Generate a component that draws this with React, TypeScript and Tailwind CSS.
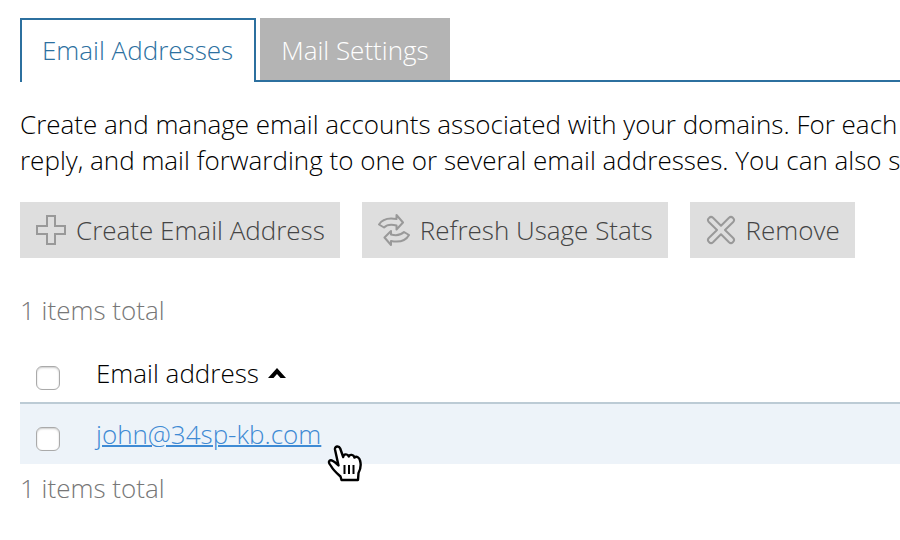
import type { ReactNode } from "react"

const intro = [
  "Create and manage email accounts associated with your domains. For each",
  "reply, and mail forwarding to one or several email addresses. You can also s",
]

const accounts = ["john@34sp-kb.com"]

function PlusIcon() {
  return (
    <svg width="30" height="30" viewBox="0 0 30 30" fill="none" stroke="#999" strokeWidth="2" aria-hidden="true">
      <path d="M11 1h8v10h10v8H19v10h-8V19H1v-8h10z" />
    </svg>
  )
}

function RefreshIcon() {
  return (
    <svg width="32" height="32" viewBox="0 0 32 32" fill="none" stroke="#999" strokeWidth="2" strokeLinejoin="round" aria-hidden="true">
      <path d="M1 10.500C4 5.500 10 3.500 18.500 5V1L25 8.500 18.500 15.500V11.500C13 10 9 10.500 6 13.500z" />
      <path d="M31 21C28 26.500 21 28.500 13 27V31L6.500 23.500 13 17V20.500C19 22 23 21 26 18z" />
    </svg>
  )
}

function CrossIcon() {
  return (
    <svg width="30" height="30" viewBox="0 0 30 30" fill="none" stroke="#999" strokeWidth="2" strokeLinejoin="round" aria-hidden="true">
      <path d="M3.300 2.800Q5 1 7 2.800L15 10.800 23 2.800Q25 1 26.800 2.800L27.200 3.200Q29 5 27.200 7L19 15 27.200 23Q29 25 27.200 26.800L26.800 27.200Q25 29 23 27.200L15 19.200 7 27.200Q5 29 3.200 27.200L2.800 26.800Q1 25 2.800 23L11 15 2.800 7Q1 5 2.800 3.200z" />
    </svg>
  )
}

function HandPointer() {
  return (
    <svg className="absolute top-10 left-[307px]" width="36" height="38" viewBox="0 0 36 38" aria-hidden="true">
      <path
        d="M8 5.500C7.500 1.800 12 1.500 13.200 4.500L16.200 13C16.500 9.800 20.500 9.500 21.800 12.500C22.800 10 26.500 10.500 27.500 13.500C29.500 11.800 32.500 13.500 33 16.500C34.500 21 33.500 25 31.500 29L31 36H14.500L13.500 32.500C9.500 29 6.500 26.500 4 22C.500 18.500 2 15.500 5 16.500C7.500 17.500 9.500 19.500 11.500 21.500L8 5.500z"
        fill="#fff"
        stroke="#000"
        strokeWidth="2.400"
        strokeLinejoin="round"
      />
      <path d="M17.500 21v9M22 21v9M26.500 21v9" stroke="#000" strokeWidth="2" />
    </svg>
  )
}

function ToolButton({ icon, children }: { icon: ReactNode; children: ReactNode }) {
  return (
    <button type="button" className="flex h-14 items-center gap-2.5 bg-[#dedede] pr-[15px] pl-4 text-[#444]">
      {icon}
      {children}
    </button>
  )
}

function CheckBox({ label }: { label: string }) {
  return (
    <input
      type="checkbox"
      aria-label={label}
      className="mt-2.5 block size-6 appearance-none rounded-md border border-[#aaa] bg-white shadow-[inset_0_1px_2px_#ccc] checked:bg-[#3e8ad4]"
    />
  )
}

export default function App() {
  return (
    <div className="overflow-hidden bg-white pt-[18px] pb-6 pl-5 font-['Open_Sans',sans-serif] text-[26px] leading-9 font-light text-black">
      <div role="tablist" className="flex h-16">
        <button type="button" role="tab" aria-selected="true" className="border-2 border-b-0 border-[#2c709f] pr-[21px] pb-0.5 pl-5 text-[#2c709f]">
          Email Addresses
        </button>
        <div className="flex grow border-b-2 border-[#2c709f] pl-1">
          <button type="button" role="tab" aria-selected="false" className="bg-[#b4b4b4] px-[21px] pt-0.5 text-white">
            Mail Settings
          </button>
        </div>
      </div>

      <p className="mt-6 whitespace-nowrap">
        {intro.map((line) => (
          <span key={line} className="block">{line}</span>
        ))}
      </p>

      <div className="mt-6 flex gap-[22px] whitespace-nowrap">
        <ToolButton icon={<PlusIcon />}>Create Email Address</ToolButton>
        <ToolButton icon={<RefreshIcon />}>Refresh Usage Stats</ToolButton>
        <ToolButton icon={<CrossIcon />}>Remove</ToolButton>
      </div>

      <div className="mt-[34px] text-[#777]">1 items total</div>

      <table className="mt-4 w-full border-separate border-spacing-0 text-left">
        <thead>
          <tr className="h-[60px]">
            <th className="w-[76px] border-b-2 border-[#bccbd5] pl-4"><CheckBox label="Select all" /></th>
            <th className="border-b-2 border-[#bccbd5] font-light" aria-sort="ascending">
              <button type="button" className="flex items-center gap-2">
                Email address
                <svg width="20" height="12" viewBox="0 0 20 12" aria-hidden="true">
                  <path d="M1 11L10 1l9 10h-5.500L10 7l-3.500 4z" />
                </svg>
              </button>
            </th>
          </tr>
        </thead>
        <tbody>
          {accounts.map((email) => (
            <tr key={email} className="relative h-[60px] bg-[#edf3f9]">
              <td className="pl-4"><CheckBox label={email} /></td>
              <td>
                <a href="#account" className="text-[#3e8ad4] underline decoration-2">{email}</a>
                <HandPointer />
              </td>
            </tr>
          ))}
        </tbody>
      </table>

      <div className="mt-1.5 text-[#777]">1 items total</div>
    </div>
  )
}
